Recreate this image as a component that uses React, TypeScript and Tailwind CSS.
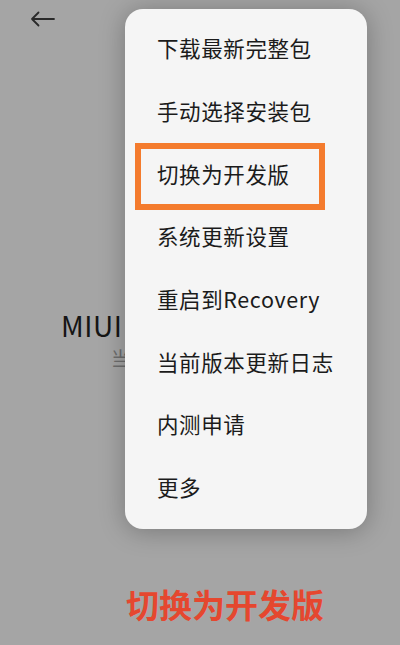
import React from "react";

const items = [
  "下载最新完整包",
  "手动选择安装包",
  "切换为开发版",
  "系统更新设置",
  "重启到Recovery",
  "当前版本更新日志",
  "内测申请",
  "更多",
];

export default function App() {
  return (
    <div
      className="relative w-[400px] h-[645px] overflow-hidden bg-[#a5a5a5] flex flex-col"
      style={{ fontFamily: '"Noto Sans CJK SC", "Noto Sans", sans-serif' }}
    >
      <div className="pt-[11px] pl-[30px]">
        <svg width="25" height="16" viewBox="0 0 25 16" fill="none">
          <path
            d="M24 8H2M8.5 1.5L2 8l6.5 6.5"
            stroke="#2a2a2a"
            strokeWidth="1.8"
            strokeLinecap="round"
            strokeLinejoin="round"
          />
        </svg>
      </div>
      <div className="mt-[281px] pl-[61px] flex flex-col">
        <div className="text-[28px] leading-[34px] text-[#151515] tracking-[0.5px]">MIUI</div>
        <div className="mt-[4px] pl-[50px] text-[19px] leading-[24px] text-[#6e6e6e]">当</div>
      </div>
      <div className="mt-auto pb-[21px] flex justify-center pl-[50px]">
        <div className="text-[33px] leading-[40px] font-bold text-[#e5472f]">切换为开发版</div>
      </div>

      <div className="absolute left-[125px] top-[9px] w-[242px] h-[520px] rounded-[18px] bg-[#f5f5f5] shadow-[0_2px_26px_rgba(0,0,0,0.28)] pt-[8px] flex flex-col">
        {items.map((t) => (
          <div
            key={t}
            className="h-[62.7px] flex items-center pl-[32px] text-[21.5px] text-[#1b1b1b] tracking-[0.6px]"
          >
            {t}
          </div>
        ))}
        <div className="absolute left-[10px] top-[134px] w-[190px] h-[67px] border-[6px] border-[#f47b2d]" />
      </div>
    </div>
  );
}
